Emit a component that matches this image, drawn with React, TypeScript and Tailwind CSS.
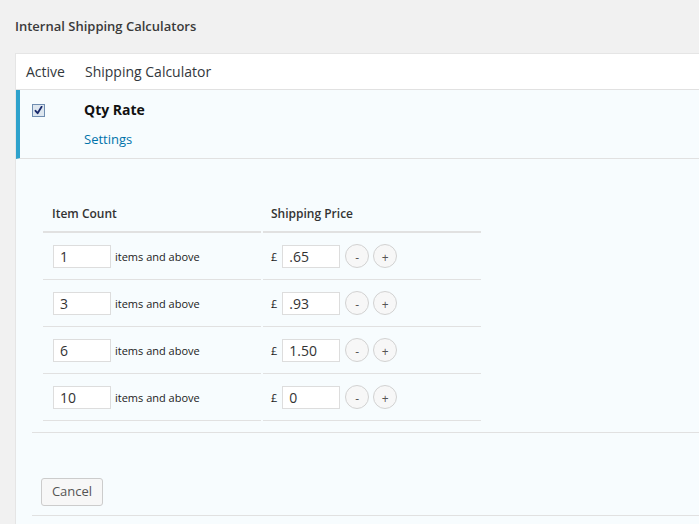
import React from 'react';

const rows = [
  { count: '1', price: '.65' },
  { count: '3', price: '.93' },
  { count: '6', price: '1.50' },
  { count: '10', price: '0' },
];

function CheckBox() {
  return (
    <div className="w-[13px] h-[13px] border border-[#6f8db0] bg-[#dde6ef] flex items-center justify-center">
      <svg width="9" height="9" viewBox="0 0 9 9">
        <path d="M1.5 4.8 L3.6 7.2 L7.6 0.8" fill="none" stroke="#1a2a6c" strokeWidth="1.8" strokeLinecap="round" strokeLinejoin="round" />
      </svg>
    </div>
  );
}

function RoundButton({ label }: { label: string }) {
  return (
    <button className="w-[24px] h-[24px] rounded-full border border-[#d2d2d2] bg-[#f7f7f7] flex items-center justify-center pt-[3px] text-[12px] leading-none text-[#555]">
      {label}
    </button>
  );
}

export default function App() {
  return (
    <div className="w-[699px] h-[524px] overflow-hidden bg-[#f1f1f1] font-['Open_Sans',sans-serif]">
      <h3 className="pl-[15px] pt-[17px] text-[13px] leading-[18px] font-semibold text-[#3a3a3a]">
        Internal Shipping Calculators
      </h3>

      <div className="ml-[15px] mt-[18px] w-[720px] border border-[#e5e5e5] bg-white">
        {/* header */}
        <div className="flex h-[36px] items-center border-b border-[#e1e1e1] text-[14px] text-[#32373c]">
          <div className="w-[69px] pl-[10px]">Active</div>
          <div>Shipping Calculator</div>
        </div>

        {/* calculator row */}
        <div className="flex h-[69px] border-b border-l-4 border-[#e1e1e1] border-l-[#2ea2cc] bg-[#f7fcfe]">
          <div className="w-[64px] pl-[12px] pt-[14px]">
            <CheckBox />
          </div>
          <div className="pt-[10px]">
            <div className="text-[14px] leading-[20px] font-bold text-[#111]">Qty Rate</div>
            <a href="#" className="mt-[9px] block text-[13px] leading-[20px] text-[#0073aa]">
              Settings
            </a>
          </div>
        </div>

        {/* settings */}
        <div className="bg-[#f7fcfe] pl-[16px]">
          <div className="pt-[36px] pb-[11px] border-b border-[#e1e1e1]">
            <div className="ml-[11px] w-[438px]">
              <div className="flex gap-[2px] text-[12px] leading-[18px] font-semibold text-[#333]">
                <div className="w-[218px] pl-[9px] pt-[10px] pb-[8px] border-b-2 border-[#e1e1e1]">Item Count</div>
                <div className="w-[218px] pl-[8px] pt-[10px] pb-[8px] border-b-2 border-[#e1e1e1]">Shipping Price</div>
              </div>
              {rows.map((r) => (
                <div key={r.count} className="flex gap-[2px]">
                  <div className="w-[218px] h-[47px] border-b border-[#e1e1e1] flex items-center pl-[10px]">
                    <div className="w-[58px] h-[23px] border border-[#ddd] bg-white pl-[6px] text-[14px] leading-[21px] text-[#333]">
                      {r.count}
                    </div>
                    <span className="ml-[4px] pt-[2px] text-[11px] text-[#222]">items and above</span>
                  </div>
                  <div className="w-[218px] h-[47px] border-b border-[#e1e1e1] flex items-center pl-[8px]">
                    <span className="pt-[2px] text-[11px] text-[#222]">£</span>
                    <div className="ml-[5px] w-[58px] h-[23px] border border-[#ddd] bg-white pl-[6px] text-[14px] leading-[21px] text-[#333]">
                      {r.price}
                    </div>
                    <div className="ml-[5px] flex gap-[4px]">
                      <RoundButton label="-" />
                      <RoundButton label="+" />
                    </div>
                  </div>
                </div>
              ))}
            </div>
          </div>
          <div className="pt-[45px] pb-[9px] border-b border-[#e1e1e1]">
            <button className="ml-[9px] w-[62px] h-[28px] rounded-[3px] border border-[#ccc] bg-[#f7f7f7] text-[13px] text-[#555]">
              Cancel
            </button>
          </div>
          <div className="h-[20px]" />
        </div>
      </div>
    </div>
  );
}
